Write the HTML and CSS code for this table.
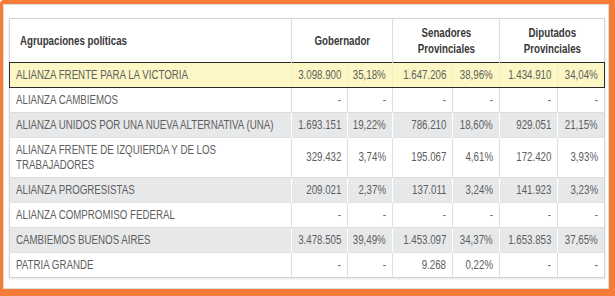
FILE: index.html
```html
<!DOCTYPE html>
<html lang="es">
<head>
<meta charset="utf-8">
<title>Resultados</title>
<link rel="stylesheet" href="styles.css">
</head>
<body>
<div class="frame">
  <div class="panel">
    <table class="results">
      <colgroup>
        <col class="c-name">
        <col class="c-a"><col class="c-b">
        <col class="c-c"><col class="c-d">
        <col class="c-e"><col class="c-f">
      </colgroup>
      <thead>
        <tr>
          <th class="h-name"><span class="t">Agrupaciones políticas</span></th>
          <th colspan="2"><span class="t">Gobernador</span></th>
          <th colspan="2"><span class="t">Senadores<br>Provinciales</span></th>
          <th colspan="2"><span class="t">Diputados<br>Provinciales</span></th>
        </tr>
      </thead>
      <tbody>
        <tr class="hl">
          <td><span class="t">ALIANZA FRENTE PARA LA VICTORIA</span></td>
          <td><span class="t">3.098.900</span></td><td><span class="t">35,18%</span></td><td><span class="t">1.647.206</span></td><td><span class="t">38,96%</span></td><td><span class="t">1.434.910</span></td><td><span class="t">34,04%</span></td>
        </tr>
        <tr>
          <td><span class="t">ALIANZA CAMBIEMOS</span></td>
          <td><span class="t">-</span></td><td><span class="t">-</span></td><td><span class="t">-</span></td><td><span class="t">-</span></td><td><span class="t">-</span></td><td><span class="t">-</span></td>
        </tr>
        <tr class="alt">
          <td><span class="t">ALIANZA UNIDOS POR UNA NUEVA ALTERNATIVA (UNA)</span></td>
          <td><span class="t">1.693.151</span></td><td><span class="t">19,22%</span></td><td><span class="t">786.210</span></td><td><span class="t">18,60%</span></td><td><span class="t">929.051</span></td><td><span class="t">21,15%</span></td>
        </tr>
        <tr>
          <td><span class="t">ALIANZA FRENTE DE IZQUIERDA Y DE LOS<br>TRABAJADORES</span></td>
          <td><span class="t">329.432</span></td><td><span class="t">3,74%</span></td><td><span class="t">195.067</span></td><td><span class="t">4,61%</span></td><td><span class="t">172.420</span></td><td><span class="t">3,93%</span></td>
        </tr>
        <tr class="alt">
          <td><span class="t">ALIANZA PROGRESISTAS</span></td>
          <td><span class="t">209.021</span></td><td><span class="t">2,37%</span></td><td><span class="t">137.011</span></td><td><span class="t">3,24%</span></td><td><span class="t">141.923</span></td><td><span class="t">3,23%</span></td>
        </tr>
        <tr>
          <td><span class="t">ALIANZA COMPROMISO FEDERAL</span></td>
          <td><span class="t">-</span></td><td><span class="t">-</span></td><td><span class="t">-</span></td><td><span class="t">-</span></td><td><span class="t">-</span></td><td><span class="t">-</span></td>
        </tr>
        <tr class="alt">
          <td><span class="t">CAMBIEMOS BUENOS AIRES</span></td>
          <td><span class="t">3.478.505</span></td><td><span class="t">39,49%</span></td><td><span class="t">1.453.097</span></td><td><span class="t">34,37%</span></td><td><span class="t">1.653.853</span></td><td><span class="t">37,65%</span></td>
        </tr>
        <tr>
          <td><span class="t">PATRIA GRANDE</span></td>
          <td><span class="t">-</span></td><td><span class="t">-</span></td><td><span class="t">9.268</span></td><td><span class="t">0,22%</span></td><td><span class="t">-</span></td><td><span class="t">-</span></td>
        </tr>
      </tbody>
    </table>
  </div>
</div>
</body>
</html>
```

FILE: styles.css
```css
html, body {
  margin: 0;
  padding: 0;
  background: #ffffff;
}

.frame {
  width: 615px;
  height: 296px;
  box-sizing: border-box;
  background: #f47c38;
  border-top-left-radius: 4px;
  padding: 4px 6px 7px 3px;
}

.panel {
  height: 100%;
  box-sizing: border-box;
  background: #ffffff;
  border: 1px solid #dedede;
  padding: 13px 4px 0 5px;
}

.results {
  border-collapse: collapse;
  table-layout: fixed;
  width: 595px;
  font-family: "Liberation Sans", Arial, sans-serif;
  font-size: 12px;
  color: #5e5e5e;
  border: 1px solid #d4d4d4;
  box-shadow: 0 1px 2px rgba(0, 0, 0, 0.12);
}

.c-name { width: 282px; }
.c-a { width: 56px; }
.c-b { width: 45px; }
.c-c { width: 60px; }
.c-d { width: 47px; }
.c-e { width: 58px; }
.c-f { width: 47px; }

.t {
  display: inline-block;
  transform: scaleX(0.81);
  transform-origin: right center;
}

.results td .t {
  margin-left: -24px;
}

.results th {
  height: 43px;
  padding: 0;
  font-weight: bold;
  color: #383838;
  line-height: 16px;
  text-align: center;
  border-left: 1px solid #dddddd;
  background: #ffffff;
  white-space: nowrap;
}

.results th .t {
  transform-origin: center center;
}

.results th.h-name {
  text-align: left;
  padding-left: 10px;
  border-left: none;
}

.results th.h-name .t,
.results td:first-child .t {
  transform-origin: left center;
}

.results td:first-child .t {
  margin-left: 0;
}

.results td {
  padding: 4.5px 6px;
  line-height: 15px;
  text-align: right;
  white-space: nowrap;
  border-left: 1px solid #dedede;
  border-top: 1px solid #e2e2e2;
  background: #ffffff;
}

.results td:first-child {
  text-align: left;
  border-left: none;
  overflow: hidden;
}

.results tr.alt td {
  background: #e7e8e9;
  border-left-color: #ffffff;
  border-top-color: #dcdcdc;
}

.results tr.alt td:first-child {
  border-left: none;
}

.results tr.hl td {
  background: #fcf7c4;
  border-top: 1px solid #2a2a2a;
  border-bottom: 1px solid #2a2a2a;
  border-left-color: #f4efc0;
}

.results tr.hl td:first-child {
  border-left: 1px solid #2a2a2a;
}

.results tr.hl td:last-child {
  border-right: 1px solid #2a2a2a;
}
```
